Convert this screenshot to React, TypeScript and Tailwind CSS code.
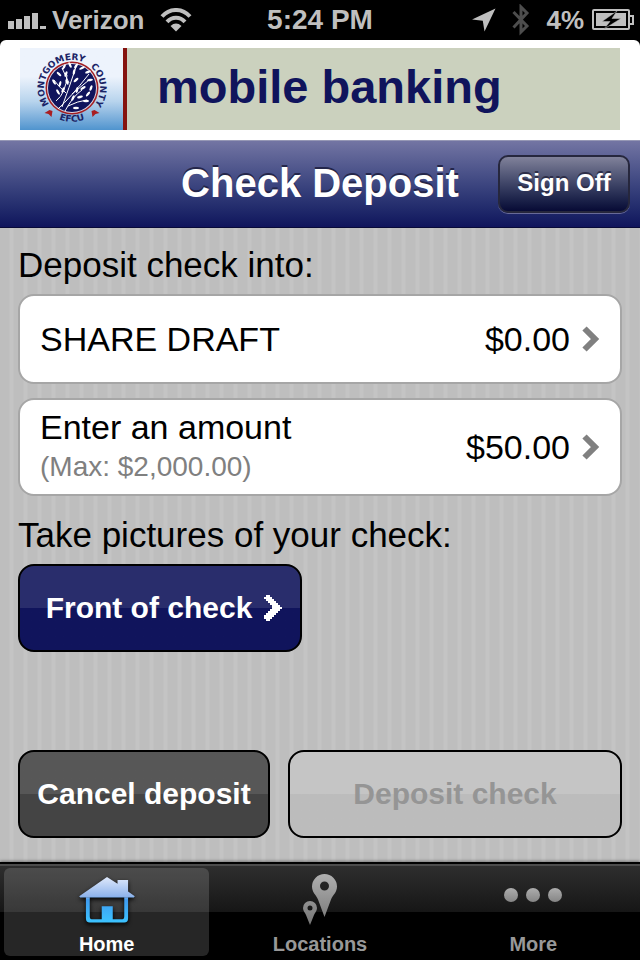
import React from "react";

const font = "font-['Liberation_Sans',Arial,sans-serif]";

function StatusBar() {
  return (
    <div className="flex h-10 items-center justify-between bg-black px-[6px] text-[26px] leading-10 font-bold text-[#bfbfbf]">
      <div className="flex flex-1 items-center">
        <svg width="40" height="18" viewBox="-2 0 40 18" fill="#bfbfbf" aria-label="Signal strength" role="img">
          <path d="M0 10h6v8H0zM8 8h6v10H8zM16 5h6v13h-6zM24 2h6v16h-6zM32 15h6v3h-6z" />
        </svg>
        <span className="ml-[6px]">Verizon</span>
        <svg className="ml-4" width="32" height="24" viewBox="0 0 32 24" fill="none" aria-label="Wi-Fi" role="img">
          <path d="M2 8.5C10-.2 22-.2 30 8.5" stroke="#bfbfbf" strokeWidth="4" />
          <path d="M7 13.8c5-5.400 13-5.400 18 0" stroke="#bfbfbf" strokeWidth="4" />
          <path d="M10.500 18q5.500-4.800 11 0L16 23.500z" fill="#bfbfbf" />
        </svg>
      </div>
      <time className="text-[28px]">5:24 PM</time>
      <div className="flex flex-1 items-center justify-end">
        <svg width="24" height="24" viewBox="0 0 24 24" fill="#bfbfbf" aria-label="Location in use" role="img">
          <path d="M23.500 .5 12.500 23.500 10.800 12.800 0 11.500z" />
        </svg>
        <svg className="ml-4" width="18" height="32" viewBox="0 0 18 32" fill="none" stroke="#4d4d4d" strokeWidth="3" aria-label="Bluetooth" role="img">
          <path d="M1.500 8 15 22 9 28V3l6 6L1.500 23.500" />
        </svg>
        <span className="ml-4">4%</span>
        <svg className="ml-2" width="42" height="22" viewBox="0 0 42 22" fill="none" aria-label="Charging" role="img">
          <rect x="1" y="1" width="36" height="19" rx="1" stroke="#bfbfbf" strokeWidth="2" />
          <path d="M37 7h4v8h-4" stroke="#bfbfbf" strokeWidth="2" />
          <path d="M4 4h30v13H4z" fill="#bfbfbf" />
          <path d="M25 2 10 12.500h8L12 20 29 9.500h-9z" fill="#000" stroke="#bfbfbf" strokeWidth=".5" />
        </svg>
      </div>
    </div>
  );
}

const leaves = [
  [64, 65, 30], [70, 63, -25], [76, 64, 35], [59, 72, -45], [66, 72, 20], [74, 70, 10],
  [82, 66, 65], [54, 80, -30], [60, 82, 15], [67, 80, -20], [76, 78, 50], [88, 70, 70],
  [90, 78, 80], [58, 90, -30], [63, 88, 20], [77, 88, 10], [83, 86, 60], [80, 95, 75],
  [88, 92, 40], [86, 99, 90], [73, 96, 25], [76, 106, 90], [91, 86, 20],
];

function Seal() {
  return (
    <svg
      width="103"
      height="82"
      viewBox="0 0 103 82"
      role="img"
      aria-label="Montgomery County EFCU"
      className="bg-linear-to-b from-[#edf3fc] from-35% via-[#b8d4ed] via-65% to-[#4f94ce] font-['DejaVu_Sans',sans-serif]"
    >
      <defs>
        <path id="arc-top" d="M34 61.400A28 28 0 1 1 70 61.400" />
        <path id="arc-bottom" d="M28 64A34 34 0 0 0 76 64" />
      </defs>
      <circle cx="52" cy="40" r="26.500" fill="#a31f23" />
      <circle cx="52" cy="40" r="25" fill="#dcd9e6" />
      <circle cx="52" cy="40" r="24" fill="#10145c" />
      <g transform="translate(-20 -46)" stroke="#fff" strokeWidth="1" fill="none">
        <path d="M58 107Q70 96 89 72M65 109Q73 94 82 88M62 105Q69 86 76 65M56 99Q66 91 67 73M66 91Q58 84 54 78M72 92 89 78M69 81 62 66M68 104Q78 99 87 98" />
      </g>
      <g transform="translate(-20 -46)" fill="#fff">
        {leaves.map(([x, y, r]) => (
          <ellipse key={`${x}-${y}`} cx={x} cy={y} rx="1.200" ry="3" transform={`rotate(${r} ${x} ${y})`} />
        ))}
      </g>
      <g fill="#1b2466" fontSize="9" fontWeight="700">
        <text>
          <textPath href="#arc-top" startOffset="7">MONTGOMERY</textPath>
        </text>
        <text>
          <textPath href="#arc-top" startOffset="88">COUNTY</textPath>
        </text>
        <text textAnchor="middle">
          <textPath href="#arc-bottom" startOffset="50%">EFCU</textPath>
        </text>
      </g>
      <path d="m24.500 65 5-3 3 1-1 6-3-3zM79.500 65l-5-3-3 1 1 6 3-3z" fill="#a91e22" />
    </svg>
  );
}

function Chevron({ className }: { className: string }) {
  return (
    <svg className={className} width="18" height="26" viewBox="0 0 18 26" fill="none" stroke="currentColor" strokeWidth="6" aria-hidden="true">
      <path d="M2.500 2.500 13 13 2.500 23.500" />
    </svg>
  );
}

function PixelChevron({ className }: { className: string }) {
  return (
    <svg className={className} width="18" height="26" viewBox="0 0 18 26" fill="currentColor" shapeRendering="crispEdges" aria-hidden="true">
      <path d="M2 0h4v2h2v2h2v2h2v2h2v2h2v2h2v2h-2v2h-2v2h-2v2h-2v2H8v2H6v2H2v-2H0v-4h2v-2h2v-2h2v-2h2v-4H6V8H4V6H2V4H0V2h2z" />
    </svg>
  );
}

function HomeIcon() {
  return (
    <svg width="56" height="46" viewBox="0 0 58 48" aria-hidden="true" className="drop-shadow-[0_2px_2px_#000]">
      <defs>
        <linearGradient id="home-fill" x1="0" y1="0" x2="0" y2="48" gradientUnits="userSpaceOnUse">
          <stop offset="0" stopColor="#dfe9fb" />
          <stop offset=".42" stopColor="#8fb4ec" />
          <stop offset=".5" stopColor="#3f9cf0" />
          <stop offset="1" stopColor="#3cc4ff" />
        </linearGradient>
      </defs>
      <g fill="url(#home-fill)">
        <path d="M29 0 40 7V3h11v12l7 5-1 1.500H1L0 20z" />
        <path fillRule="evenodd" d="M7 21h44v22q0 4.500-4 4.500H11q-4 0-4-4.500zM11 21v20q0 3 2 3h10.500V30.500H35V44h10q2 0 2-3V21z" />
      </g>
    </svg>
  );
}

function PinsIcon() {
  return (
    <svg width="34" height="52" viewBox="0 0 34 52" aria-hidden="true">
      <defs>
        <linearGradient id="pin-fill" x1="0" y1="0" x2="0" y2="52" gradientUnits="userSpaceOnUse">
          <stop offset="0" stopColor="#b0b0b0" />
          <stop offset="1" stopColor="#747474" />
        </linearGradient>
      </defs>
      <g fill="url(#pin-fill)" fillRule="evenodd">
        <path d="M21.500 0A12.500 12.500 0 0 1 34 12.500c0 6-4 8-6 13L21.500 43 15 25.500c-2-5-6-7-6-13A12.500 12.500 0 0 1 21.500 0zm0 7.500a4.500 4.500 0 1 0 0 9 4.500 4.500 0 0 0 0-9z" />
        <path d="M7 27a7 7 0 0 1 7 7c0 3-2 4.500-3 7L7 51 3 41c-1-2.500-3-4-3-7a7 7 0 0 1 7-7zm0 4.500a2.500 2.500 0 1 0 0 5 2.500 2.500 0 0 0 0-5z" />
      </g>
    </svg>
  );
}

function MoreIcon() {
  return (
    <svg width="58" height="24" viewBox="0 0 58 24" aria-hidden="true">
      <defs>
        <linearGradient id="dot-fill" x1="0" y1="0" x2="0" y2="1">
          <stop offset="0" stopColor="#adadad" />
          <stop offset="1" stopColor="#858585" />
        </linearGradient>
      </defs>
      <g fill="url(#dot-fill)">
        <circle cx="7" cy="7" r="7" />
        <circle cx="29" cy="7" r="7" />
        <circle cx="51" cy="7" r="7" />
      </g>
    </svg>
  );
}

function Tab({ label, active, children }: { label: string; active?: boolean; children: React.ReactNode }) {
  return (
    <a
      href="#"
      aria-current={active ? "page" : undefined}
      className={
        active
          ? "mx-1 flex h-[88px] flex-col rounded-md bg-white/15 text-center text-white"
          : "mx-1 flex h-[88px] flex-col text-center text-[#989898]"
      }
    >
      <span className="flex h-[65px] items-center justify-center">{children}</span>
      <span className="text-[20px] leading-6 font-bold">{label}</span>
    </a>
  );
}

export default function App() {
  return (
    <div className={`flex min-h-screen flex-col bg-black ${font}`}>
      <StatusBar />
      <div className="rounded-t-md bg-white px-5 pt-2 pb-[10px]">
        <div className="flex h-[82px] items-center bg-[#cbd1be]">
          <Seal />
          <div className="h-full w-1 bg-[#85130f]" />
          <p className="ml-[30px] pb-1 text-[47px] leading-[56px] font-bold text-[#10145c]">mobile banking</p>
        </div>
      </div>

      <header className="grid h-[88px] grid-cols-[1fr_auto_1fr] items-center border-t border-b border-t-[#9698b5] border-b-[#080a38] bg-linear-to-b from-[#7375a3] to-[#10145c] px-[10px] text-white">
        <h1 className="col-start-2 pb-[2px] text-[40px] leading-[48px] font-bold text-shadow-[0_-2px_0_#24264a]">Check Deposit</h1>
        <button
          type="button"
          className="h-[58px] w-[132px] justify-self-end rounded-[10px] border-2 border-[#26273d] bg-linear-to-b from-[#81829a] to-[#080a35] pb-[2px] text-[24px] leading-7 font-bold shadow-[0_1px_0_#686a98] text-shadow-[0_-2px_0_#2d2e48]"
        >
          Sign Off
        </button>
      </header>

      <main className="flex flex-1 flex-col bg-[repeating-linear-gradient(90deg,#bebebe_0px,#bebebe_9px,#c4c4c4_10px,#c4c4c4_13px,#bebebe_14px)] px-[18px] pt-4 pb-6 text-[34px] leading-[42px] text-black">
        <h2 className="text-[35px]">Deposit check into:</h2>
        <button type="button" className="mt-2 flex h-[90px] items-center rounded-2xl border-2 border-[#a6a6a6] bg-white px-5 text-left">
          <span className="flex-1">SHARE DRAFT</span>
          <span>$0.00</span>
          <Chevron className="ml-3 text-[#808080]" />
        </button>
        <button type="button" className="mt-[14px] flex h-[98px] items-center rounded-2xl border-2 border-[#a6a6a6] bg-white px-5 text-left">
          <span className="flex-1">
            <span className="block leading-10">Enter an amount</span>
            <span className="block text-[28px] leading-10 text-[#808080]">(Max: $2,000.00)</span>
          </span>
          <span>$50.00</span>
          <Chevron className="ml-3 text-[#808080]" />
        </button>
        <h2 className="mt-[18px] text-[35px]">Take pictures of your check:</h2>
        <button
          type="button"
          className="mt-2 flex h-[88px] w-[284px] items-center justify-center self-start rounded-2xl border-2 border-black bg-linear-to-b from-[#292d6c] from-50% to-[#10145c] to-50% pl-2 text-[30px] font-bold text-white"
        >
          Front of check
          <PixelChevron className="ml-3" />
        </button>

        <div className="mt-auto flex gap-[18px] text-[30px] font-bold">
          <button
            type="button"
            className="h-[88px] w-[252px] rounded-2xl border-2 border-black bg-linear-to-b from-[#575757] from-50% to-[#444444] to-50% text-white"
          >
            Cancel deposit
          </button>
          <button
            type="button"
            disabled
            className="h-[88px] flex-1 rounded-2xl border-2 border-black bg-linear-to-b from-[#c5c5c5] from-50% to-[#bcbcbc] to-50% text-[#959595]"
          >
            Deposit check
          </button>
        </div>
      </main>

      <nav className="border-t-2 border-black shadow-[0_-1px_3px_#0006]">
        <div className="grid h-24 grid-cols-3 border-t-2 border-[#4c4c4c] bg-linear-[180deg,#2e2e2e_0px,#161616_46px,#000_46px] pt-[2px]">
          <Tab label="Home" active>
            <HomeIcon />
          </Tab>
          <Tab label="Locations">
            <PinsIcon />
          </Tab>
          <Tab label="More">
            <MoreIcon />
          </Tab>
        </div>
      </nav>
    </div>
  );
}
